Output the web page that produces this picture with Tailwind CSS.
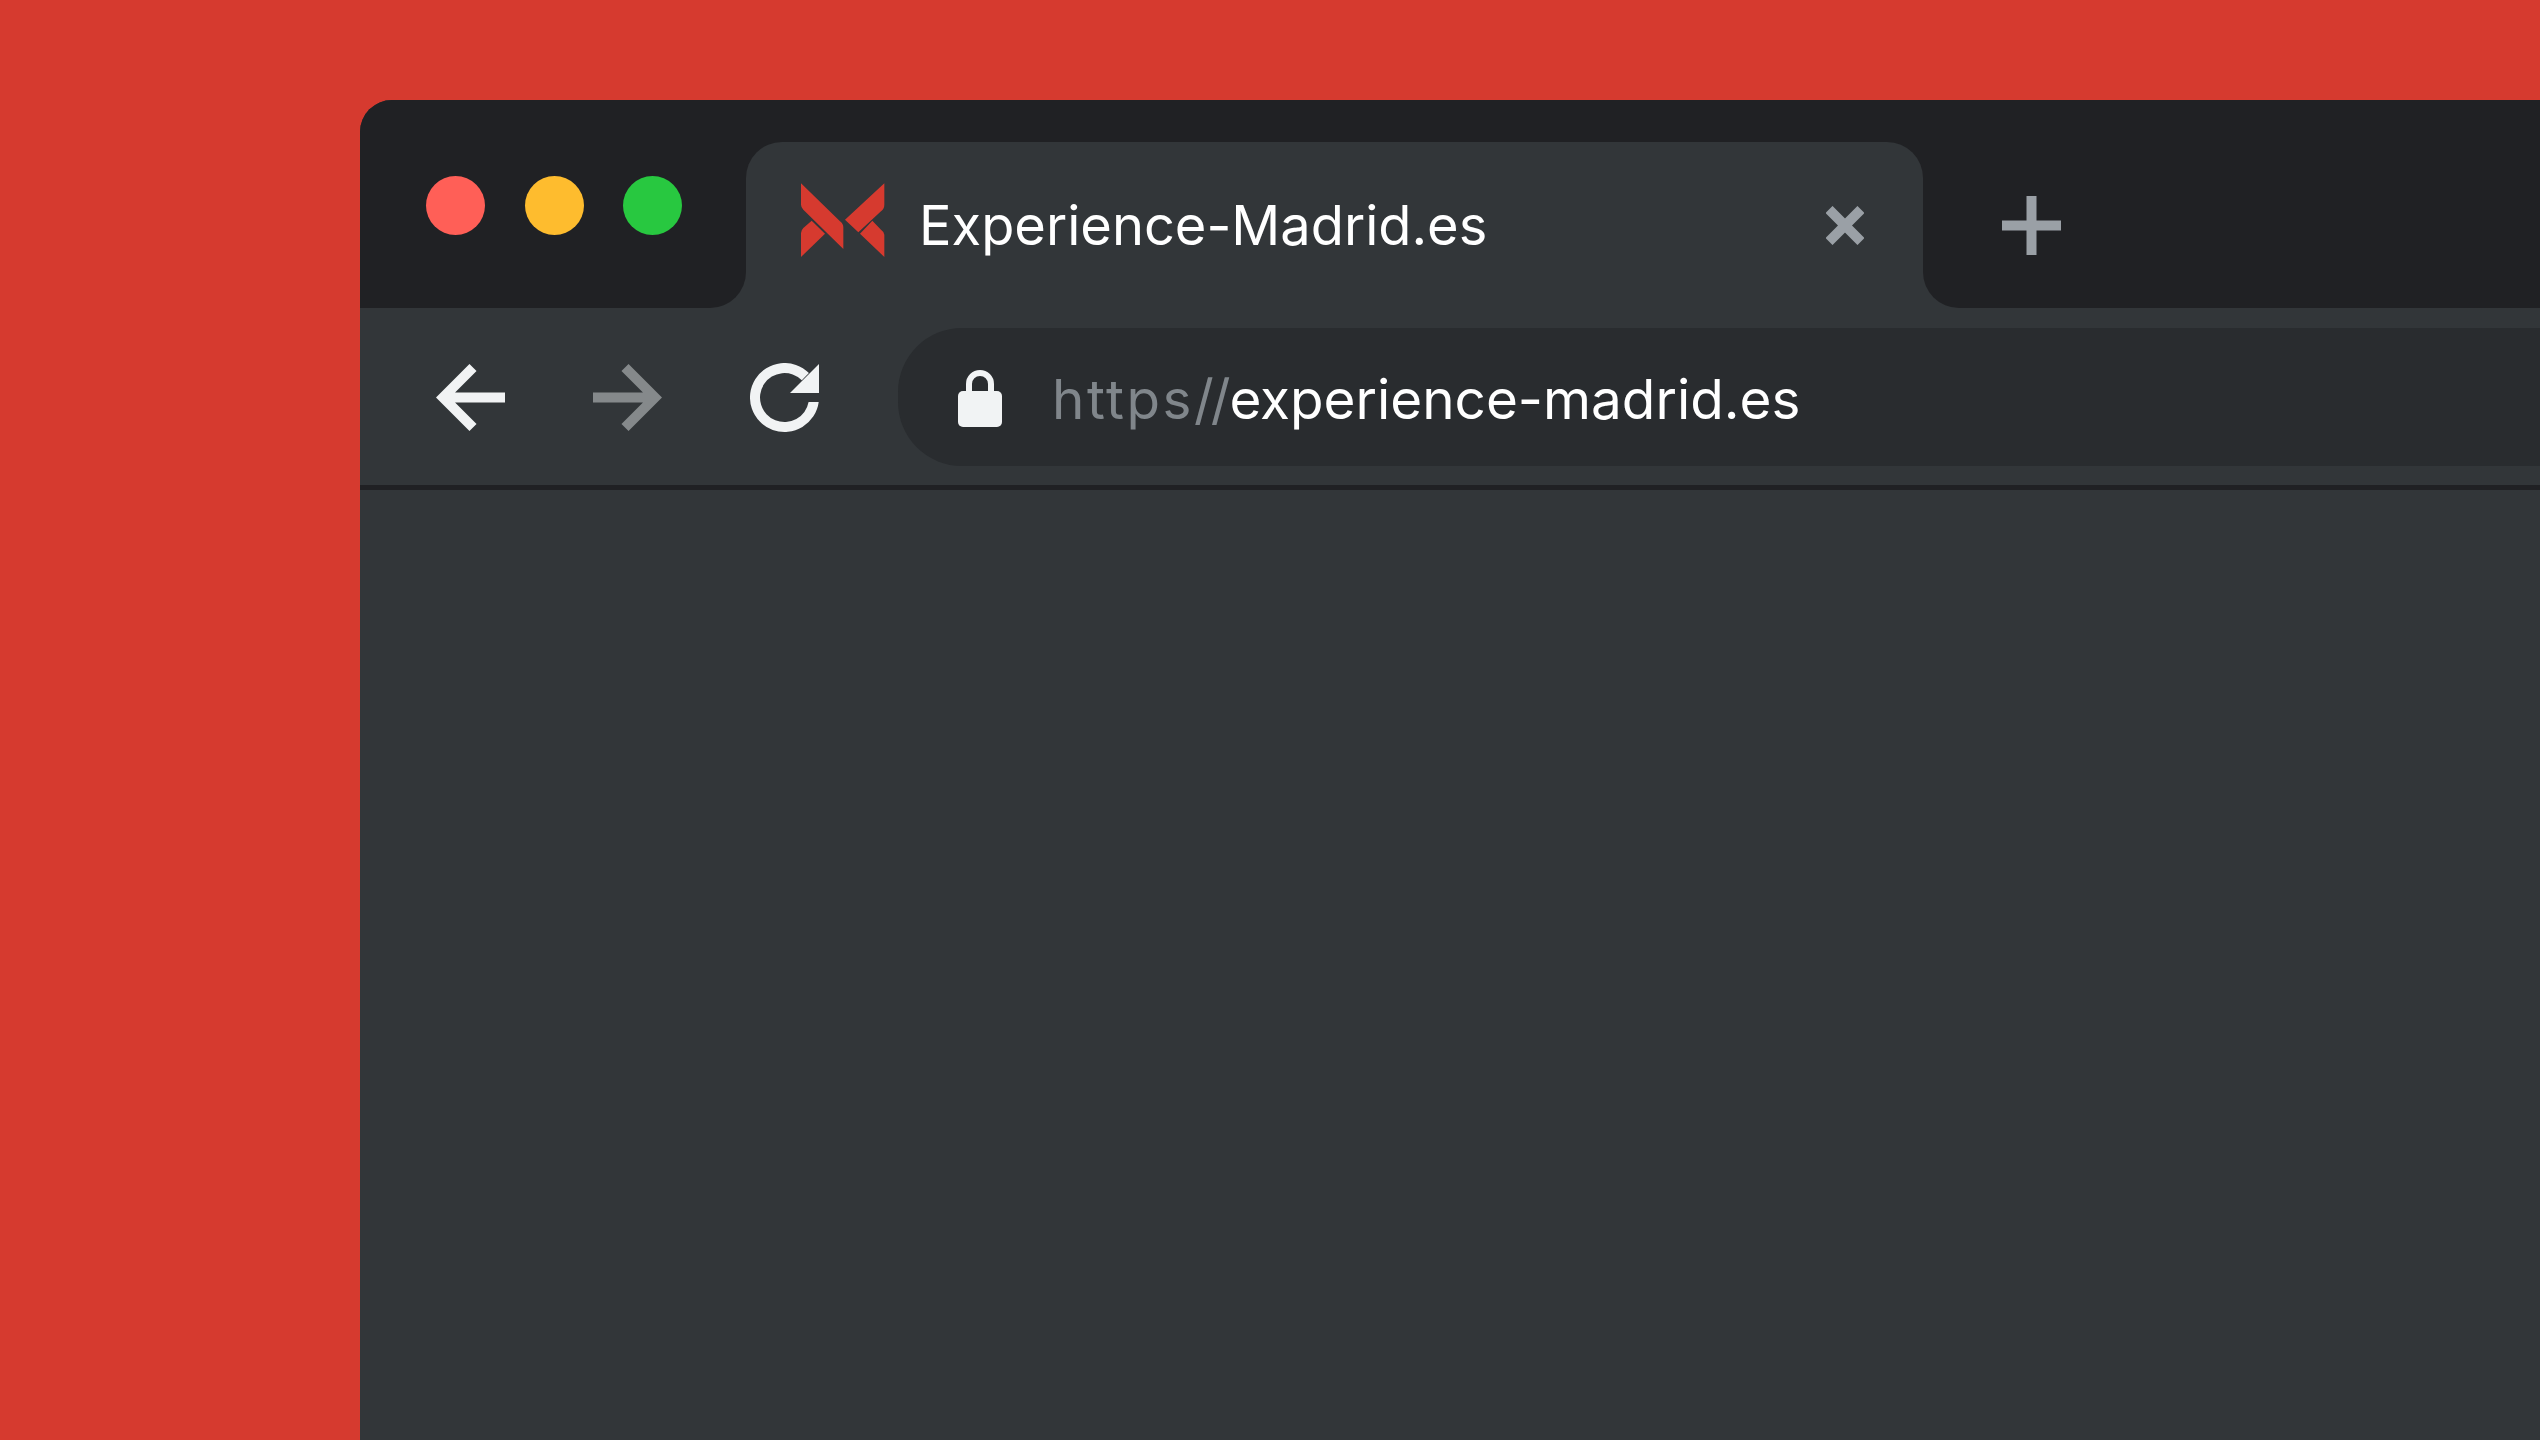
<!DOCTYPE html>
<html lang="es">
<head>
  <meta charset="UTF-8" />
  <title>Experience-Madrid.es</title>
  <script src="https://cdn.jsdelivr.net/npm/@tailwindcss/browser@4"></script>
</head>
<body class="bg-[#d63a2f] h-[1440px] overflow-hidden pl-[360px] pt-[100px] font-['Inter',sans-serif]">
  <div class="h-[1340px] rounded-tl-[32px] overflow-hidden bg-[#323639]">

    <!-- title bar -->
    <div class="flex h-[208px]">
      <div class="w-[386px] bg-[#202124] rounded-br-[36px] flex gap-[39.5px] pl-[66px] pt-[76px]">
        <span class="w-[59px] h-[59px] rounded-full bg-[#ff5f57]"></span>
        <span class="w-[59px] h-[59px] rounded-full bg-[#febc2e]"></span>
        <span class="w-[59px] h-[59px] rounded-full bg-[#28c840]"></span>
      </div>
      <div class="w-[1177px] bg-[#202124] pt-[42px]">
        <div class="h-[166px] bg-[#323639] rounded-t-[36px] flex items-start pl-[54px] relative">
          <svg class="mt-[41px] shrink-0" width="85" height="74" viewBox="60 39 255 222">
            <path fill="#d63a2f" d="M63 40L180 154Q190 161 190 172V237L70 119Q63 112 63 104Z" />
            <path fill="#d63a2f" d="M313 40V104Q313 116 303 124L235 187L195 149Z" />
            <path fill="#d63a2f" d="M95 152L135 191L63 261V189Q63 181 70 174Z" />
            <path fill="#d63a2f" d="M277 152L303 179Q313 186 313 194V261L240 191Z" />
          </svg>
          <span class="ml-[34px] mt-[51px] text-[54.200px] leading-[64px] font-normal text-white">Experience-Madrid.es</span>
          <svg class="absolute left-[1080px] top-[64px]" width="38" height="39" viewBox="0 0 38 39">
            <path stroke="#9aa0a6" stroke-width="10" d="M3 3.500L35 35.500M35 3.500L3 35.500" />
          </svg>
        </div>
      </div>
      <div class="flex-1 bg-[#202124] rounded-bl-[36px] pl-[79px] pt-[96px]">
        <svg width="59" height="59" viewBox="0 0 59 59">
          <path fill="#9aa0a6" d="M24.500 0h10v24.500h24.500v10h-24.500v24.500h-10v-24.500h-24.500v-10h24.500z" />
        </svg>
      </div>
    </div>

    <!-- toolbar -->
    <div class="flex h-[182px] border-b-[5px] border-[#202124] pt-[20px]">
      <div class="w-[538px] flex items-start pl-[76px] pt-[35px]">
        <svg width="69" height="69" viewBox="0 0 69 69" class="shrink-0">
          <path fill="none" stroke="#f1f3f4" stroke-width="10" d="M69 34.500H10M37 4.500L7 34.500L37 64.500" />
        </svg>
        <svg width="69" height="69" viewBox="0 0 69 69" class="shrink-0 ml-[88px]">
          <path fill="none" stroke="#85898b" stroke-width="10" d="M0 34.500H59M32 4.500L62 34.500L32 64.500" />
        </svg>
        <svg width="69" height="69" viewBox="0 0 69 69" class="shrink-0 ml-[88px]">
          <path fill="#f1f3f4" d="M68.700 39A34.500 34.500 0 1 1 58.900 10.100L51.800 17.200A24.500 24.500 0 1 0 58.600 39Z" />
          <path fill="#f1f3f4" d="M69 1V30H40Z" />
        </svg>
      </div>
      <div class="flex-1 h-[138px] bg-[#292c2f] rounded-l-[64px] flex items-start pl-[60px]">
        <svg width="44" height="57" viewBox="0 0 44 57" class="mt-[42px] shrink-0">
          <path fill="none" stroke="#f1f3f4" stroke-width="6" d="M11 26V14A11 11 0 0 1 33 14V26" />
          <rect y="21" width="44" height="36" rx="5" fill="#f1f3f4" />
        </svg>
        <span class="ml-[50px] mt-[39px] text-[54.800px] leading-[64px] font-normal text-white"><span class="text-[#80868b] tracking-[2.500px]">https</span><span class="text-[#80868b] tracking-[-3px] mr-[2px]">//</span>experience-madrid.es</span>
      </div>
    </div>

  </div>
</body>
</html>
